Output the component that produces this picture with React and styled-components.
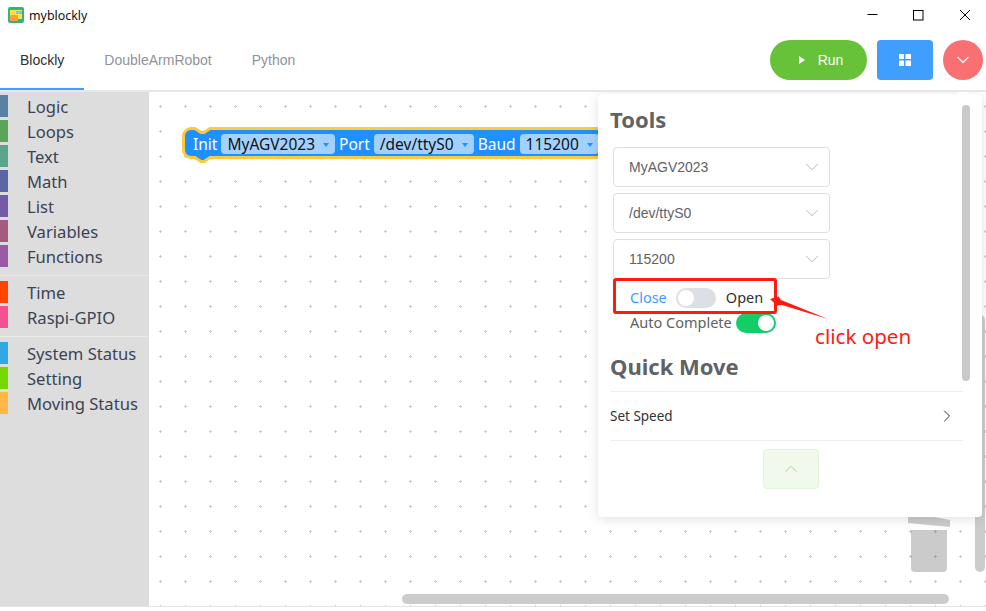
import React from "react";
import styled, { createGlobalStyle } from "styled-components";
import { ChevronDown, ChevronRight, ChevronUp } from "lucide-react";

const GlobalStyle = createGlobalStyle`
  html, body {
    margin: 0;
    padding: 0;
    height: 100%;
    background: #fff;
    overflow: hidden;
  }
  #root { height: 100%; }
  * { box-sizing: border-box; }
`;

const Page = styled.div`
  height: 611px;
  padding-bottom: 4px;
  display: flex;
  flex-direction: column;
  font-family: "Liberation Sans", Arial, sans-serif;
  color: #303133;
`;

const TitleBar = styled.div`
  height: 30px;
  display: flex;
  align-items: center;
  padding-left: 8px;
`;

const AppTitle = styled.span`
  margin-left: 5px;
  font-family: "Noto Sans", sans-serif;
  font-size: 12.4px;
  color: #111;
`;

const WindowControls = styled.div`
  margin-left: auto;
  display: flex;
  align-items: center;
`;

const WindowButton = styled.div`
  width: 46px;
  height: 30px;
  padding-left: 3px;
  display: flex;
  align-items: center;
  justify-content: center;
`;

const TopBar = styled.div`
  height: 62px;
  display: flex;
  border-bottom: 2px solid #e4e7ed;
  padding-right: 3px;
`;

const Tab = styled.div`
  height: 60px;
  padding: 2px 20px 0;
  display: flex;
  align-items: center;
  font-size: 14px;
  color: ${(p) => (p.$active ? "#303133" : "#909399")};
  border-bottom: 2px solid ${(p) => (p.$active ? "#409eff" : "transparent")};
  margin-bottom: -2px;
`;

const Actions = styled.div`
  margin-left: auto;
  height: 40px;
  margin-top: 10px;
  display: flex;
  gap: 10px;
`;

const RunButton = styled.div`
  width: 97px;
  height: 40px;
  border-radius: 20px;
  background: #67c23a;
  color: #fff;
  font-size: 14px;
  display: flex;
  align-items: center;
  justify-content: center;
  gap: 13px;
  padding-left: 5px;
`;

const GridButton = styled.div`
  width: 56px;
  height: 40px;
  border-radius: 4px;
  background: #409eff;
  display: flex;
  align-items: center;
  justify-content: center;
`;

const RoundButton = styled.div`
  width: 40px;
  height: 40px;
  border-radius: 50%;
  background: #f87072;
  display: flex;
  align-items: center;
  justify-content: center;
  color: #fff;
`;

const Main = styled.div`
  flex: 1;
  display: flex;
  min-height: 0;
  border-bottom: 1px solid #e4e4e4;
`;

const Sidebar = styled.div`
  width: 149px;
  background: #ddd;
  padding-top: 3px;
  font-family: "Noto Sans", sans-serif;
  font-size: 16.6px;
  color: #3a4354;
`;

const CategoryRow = styled.div`
  height: 22px;
  margin-bottom: 3px;
  display: flex;
  align-items: center;
  white-space: nowrap;
`;

const CategorySwatch = styled.span`
  width: 8px;
  height: 22px;
  margin-right: 19px;
  background: ${(p) => p.$color};
`;

const CategoryName = styled.span`
  margin-top: 1px;
`;

const CategorySep = styled.div`
  height: 1px;
  margin: 8px 0 5px;
  background: #e9e9e9;
`;

const Canvas = styled.div`
  position: relative;
  flex: 1;
  overflow: hidden;
  background: #fff;
`;

const Backdrop = styled.svg`
  position: absolute;
  left: 0;
  top: 0;
  width: 100%;
  height: 100%;
`;

const VScroll = styled.div`
  position: absolute;
  left: 826px;
  top: 223px;
  width: 10px;
  height: 257px;
  border-radius: 5px;
  background: #ccc;
`;

const HScroll = styled.div`
  position: absolute;
  left: 253px;
  top: 502px;
  width: 547px;
  height: 10px;
  border-radius: 5px;
  background: #ccc;
`;

const Block = styled.div`
  position: absolute;
  left: 33px;
  top: 35px;
  width: 440px;
  height: 36px;
  padding: 0 0 2px 11px;
  display: flex;
  align-items: center;
  gap: 4px;
  font-family: "Noto Sans", sans-serif;
  font-size: 15.5px;
  white-space: nowrap;
`;

const BlockShape = styled.svg`
  position: absolute;
  left: 0;
  top: 0;
  width: 440px;
  height: 36px;
`;

const BlockLabel = styled.span`
  position: relative;
  color: #fff;
`;

const BlockField = styled.span`
  position: relative;
  height: 20px;
  padding: 0 6px;
  border-radius: 4px;
  background: #a3d1ff;
  color: #111;
  display: flex;
  align-items: center;
  gap: 8px;
`;

const FieldArrow = styled.span`
  width: 0;
  height: 0;
  border-left: 3px solid transparent;
  border-right: 3px solid transparent;
  border-top: 4px solid #1e90ff;
  margin-top: 2px;
`;

const Panel = styled.div`
  position: absolute;
  left: 449px;
  top: 2px;
  width: 384px;
  height: 423px;
  padding: 10px 12px 12px;
  background: #fff;
  border-radius: 4px;
  box-shadow: 0 2px 12px rgba(0, 0, 0, 0.12);
`;

const PanelArrow = styled.div`
  position: absolute;
  left: 361px;
  top: -4px;
  width: 8px;
  height: 8px;
  background: #fff;
  transform: rotate(45deg);
`;

const PanelScroll = styled.div`
  position: absolute;
  left: 364px;
  top: 11px;
  width: 8px;
  height: 276px;
  border-radius: 4px;
  background: #c9c9c9;
`;

const PanelTitle = styled.div`
  height: 30px;
  line-height: 30px;
  font-family: "Noto Sans", sans-serif;
  font-size: 22px;
  font-weight: 700;
  color: #606266;
`;

const SelectList = styled.div`
  margin: 13px 0 0 3px;
  width: 217px;
  display: flex;
  flex-direction: column;
  gap: 6px;
`;

const SelectBox = styled.div`
  height: 40px;
  padding: 0 6px 0 15px;
  border: 1px solid #dcdfe6;
  border-radius: 4px;
  display: flex;
  align-items: center;
  justify-content: space-between;
  font-size: 14px;
  color: #606266;
`;

const SwitchRow = styled.div`
  margin-left: 20px;
  height: ${(p) => p.$height}px;
  display: flex;
  align-items: center;
  font-family: "Noto Sans", sans-serif;
  font-size: 14.5px;
  color: #606266;
`;

const SwitchLabel = styled.span`
  color: ${(p) => p.$color || "#606266"};
  margin: -2px ${(p) => p.$right || 0}px 0 ${(p) => p.$left || 0}px;
`;

const Toggle = styled.span`
  position: relative;
  flex: none;
  width: 40px;
  height: 20px;
  border-radius: 10px;
  background: ${(p) => (p.$on ? "#13ce66" : "#dcdfe6")};
  &::after {
    content: "";
    position: absolute;
    top: 2px;
    left: ${(p) => (p.$on ? "22px" : "2px")};
    width: 16px;
    height: 16px;
    border-radius: 50%;
    background: #fff;
  }
`;

const SectionTitle = styled(PanelTitle)`
  margin-top: 22px;
`;

const CollapseRow = styled.div`
  margin-top: 10px;
  width: 353px;
  height: 50px;
  border-top: 1px solid #ebeef5;
  border-bottom: 1px solid #ebeef5;
  display: flex;
  align-items: center;
  justify-content: space-between;
  padding-right: 6px;
  font-family: "Noto Sans", sans-serif;
  font-size: 13.5px;
  color: #303133;
`;

const UpButton = styled.div`
  margin: 8px 0 0 153px;
  width: 56px;
  height: 40px;
  background: #f0f9eb;
  border: 1px solid #e1f3d8;
  border-radius: 4px;
  display: flex;
  align-items: center;
  justify-content: center;
  color: #b3e19d;
`;

const Callout = styled.div`
  position: absolute;
  left: 15px;
  top: 184px;
  width: 164px;
  height: 36px;
  border: 3px solid #ff1a10;
  border-radius: 3px;
`;

const CalloutArrow = styled.svg`
  position: absolute;
  left: 170px;
  top: 194px;
  width: 62px;
  height: 34px;
`;

const CalloutText = styled.span`
  position: absolute;
  left: 217px;
  top: 228px;
  font-family: "Noto Sans", sans-serif;
  font-size: 20.6px;
  line-height: 28px;
  color: #ff1a10;
  white-space: nowrap;
`;

const categoryGroups = [
  [
    ["Logic", "#5b80a5"],
    ["Loops", "#5ba55b"],
    ["Text", "#5ba58c"],
    ["Math", "#5b67a5"],
    ["List", "#745ba5"],
    ["Variables", "#a55b80"],
    ["Functions", "#995ba5"],
  ],
  [
    ["Time", "#ff4500"],
    ["Raspi-GPIO", "#f5508f"],
  ],
  [
    ["System Status", "#2fa9e0"],
    ["Setting", "#77d800"],
    ["Moving Status", "#ffb845"],
  ],
];

const selects = ["MyAGV2023", "/dev/ttyS0", "115200"];

const Logo = () => (
  <svg width="16" height="16" viewBox="0 0 16 16">
    <rect width="16" height="16" rx="2" fill="#2fb67c" />
    <rect x="2" y="3" width="12" height="9" fill="#ffe14d" />
    <rect x="8" y="4" width="6" height="3" fill="#7cc4e8" />
    <rect x="2" y="8" width="8" height="6" rx="1" fill="#f9a13a" />
  </svg>
);

const App = () => {
  return (
    <Page>
      <GlobalStyle />
      <TitleBar>
        <Logo />
        <AppTitle>myblockly</AppTitle>
        <WindowControls>
          <WindowButton>
            <svg width="11" height="11" viewBox="0 0 11 11">
              <path d="M0.5 4.500h10" stroke="#000" fill="none" />
            </svg>
          </WindowButton>
          <WindowButton>
            <svg width="11" height="11" viewBox="0 0 11 11">
              <rect x="0.5" y="0.5" width="9.5" height="9.5" stroke="#000" fill="none" />
            </svg>
          </WindowButton>
          <WindowButton>
            <svg width="12" height="12" viewBox="0 0 12 12">
              <path d="M1 1l10 10M11 1L1 11" stroke="#000" fill="none" />
            </svg>
          </WindowButton>
        </WindowControls>
      </TitleBar>

      <TopBar>
        <Tab $active>Blockly</Tab>
        <Tab>DoubleArmRobot</Tab>
        <Tab>Python</Tab>
        <Actions>
          <RunButton>
            <svg width="6" height="8" viewBox="0 0 6 8">
              <path d="M0 0l6 4-6 4z" fill="#fff" />
            </svg>
            Run
          </RunButton>
          <GridButton>
            <svg width="12" height="12" viewBox="0 0 12 12">
              <path d="M0 0h5v5H0zM6.500 0H12v5H6.500zM0 6.500h5V12H0zM6.500 6.500H12V12H6.500z" fill="#fff" />
            </svg>
          </GridButton>
          <RoundButton>
            <ChevronDown size={20} strokeWidth={1.5} />
          </RoundButton>
        </Actions>
      </TopBar>

      <Main>
        <Sidebar>
          {categoryGroups.map((group, i) => (
            <React.Fragment key={i}>
              {i > 0 && <CategorySep />}
              {group.map(([name, color]) => (
                <CategoryRow key={name}>
                  <CategorySwatch $color={color} />
                  <CategoryName>{name}</CategoryName>
                </CategoryRow>
              ))}
            </React.Fragment>
          ))}
        </Sidebar>

        <Canvas>
          <Backdrop>
            <defs>
              <pattern id="dots" x="10" y="13" width="25" height="25" patternUnits="userSpaceOnUse">
                <path d="M0 1.500h3M1.500 0v3" stroke="#ccc" strokeWidth="1" />
              </pattern>
            </defs>
            <rect width="100%" height="100%" fill="url(#dots)" />
            <g fill="#000" opacity="0.2">
              <path d="M759 420L801 428V435L759 431Z" />
              <path d="M762 438H798V476a4 4 0 0 1-4 4H766a4 4 0 0 1-4-4Z" />
            </g>
          </Backdrop>
          <VScroll />
          <HScroll />

          <Block>
            <BlockShape viewBox="0 0 440 36">
              <path
                d="M1.500 9A7.500 7.500 0 0 1 9 1.500H13l6 4h3l6-4H440V30.500H28l-6 4h-3l-6-4H9A7.500 7.500 0 0 1 1.500 23Z"
                fill="#1e90ff"
                stroke="#fdc93f"
                strokeWidth="3"
              />
            </BlockShape>
            <BlockLabel>Init</BlockLabel>
            <BlockField>
              MyAGV2023
              <FieldArrow />
            </BlockField>
            <BlockLabel>Port</BlockLabel>
            <BlockField>
              /dev/ttyS0
              <FieldArrow />
            </BlockField>
            <BlockLabel>Baud</BlockLabel>
            <BlockField>
              115200
              <FieldArrow />
            </BlockField>
          </Block>

          <Panel>
            <PanelArrow />
            <PanelScroll />
            <PanelTitle>Tools</PanelTitle>
            <SelectList>
              {selects.map((value) => (
                <SelectBox key={value}>
                  {value}
                  <ChevronDown size={22} strokeWidth={1.1} color="#c0c4cc" />
                </SelectBox>
              ))}
            </SelectList>
            <SwitchRow $height={38}>
              <SwitchLabel $color="#409eff" $right={9}>Close</SwitchLabel>
              <Toggle />
              <SwitchLabel $color="#303133" $left={10}>Open</SwitchLabel>
            </SwitchRow>
            <SwitchRow $height={12}>
              <SwitchLabel $right={4}>Auto Complete</SwitchLabel>
              <Toggle $on />
            </SwitchRow>
            <SectionTitle>Quick Move</SectionTitle>
            <CollapseRow>
              Set Speed
              <ChevronRight size={20} strokeWidth={1.2} color="#303133" />
            </CollapseRow>
            <UpButton>
              <ChevronUp size={22} strokeWidth={1.1} />
            </UpButton>

            <Callout />
            <CalloutArrow viewBox="0 0 62 34">
              <path d="M2 11L10.500 8.500 13 12 60 31 14 17 9 17.500Z" fill="#ff1a10" />
            </CalloutArrow>
            <CalloutText>click open</CalloutText>
          </Panel>
        </Canvas>
      </Main>
    </Page>
  );
};

export default App;
